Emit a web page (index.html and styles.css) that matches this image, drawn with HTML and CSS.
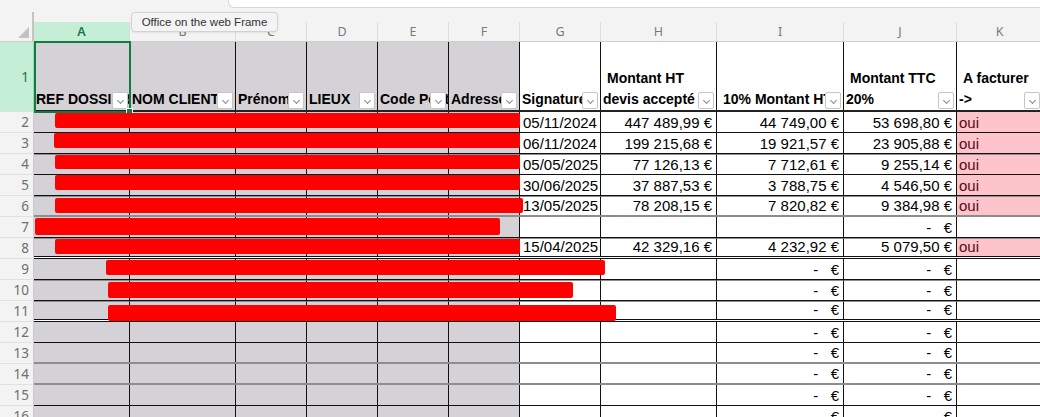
FILE: index.html
```html
<!DOCTYPE html>
<html lang="fr">
<head>
<meta charset="utf-8">
<title>Feuille</title>
<link rel="stylesheet" href="styles.css">
</head>
<body>
<div class="app">
  <div class="topbar"><div class="fx"></div></div>

  <div class="colhead">
    <div class="corner"><span class="tri"></span></div>
    <div class="cl sel w-a">A</div>
    <div class="cl w-b">B</div>
    <div class="cl w-c">C</div>
    <div class="cl w-d">D</div>
    <div class="cl w-e">E</div>
    <div class="cl w-f">F</div>
    <div class="cl w-g">G</div>
    <div class="cl w-h">H</div>
    <div class="cl w-i">I</div>
    <div class="cl w-j">J</div>
    <div class="cl w-k">K</div>
  </div>

  <div class="sheet">
    <div class="row r1">
      <div class="rn sel">1</div>
      <div class="cells b-2">
        <div class="c hc g w-a nob"><span>REF DOSSIER</span><i class="fb"></i></div>
        <div class="c hc g w-b"><span>NOM CLIENT</span><i class="fb"></i></div>
        <div class="c hc g w-c"><span>Prénom</span><i class="fb"></i></div>
        <div class="c hc g w-d"><span>LIEUX</span><i class="fb"></i></div>
        <div class="c hc g w-e"><span>Code Postal</span><i class="fb"></i></div>
        <div class="c hc g w-f"><span>Adresse</span><i class="fb"></i></div>
        <div class="c hc w-g"><span>Signature</span><i class="fb"></i></div>
        <div class="c hc w-h"><span class="l1">Montant HT</span><span>devis accepté</span><i class="fb"></i></div>
        <div class="c hc w-i"><span class="l1b">10% Montant HT</span><i class="fb"></i></div>
        <div class="c hc w-j"><span class="l1">Montant TTC</span><span>20%</span><i class="fb"></i></div>
        <div class="c hc w-k"><span class="l1">A facturer</span><span>-&gt;</span><i class="fb"></i></div>
      </div>
    </div>

    <div class="row"><div class="rn">2</div><div class="cells b-s">
      <div class="c g w-a"></div><div class="c g w-b"></div><div class="c g w-c"></div><div class="c g w-d"></div><div class="c g w-e"></div><div class="c g w-f"></div>
      <div class="c w-g">05/11/2024</div><div class="c n w-h">447&nbsp;489,99&nbsp;€</div><div class="c n w-i">44&nbsp;749,00&nbsp;€</div><div class="c n w-j">53&nbsp;698,80&nbsp;€</div><div class="c p w-k">oui</div>
    </div></div>

    <div class="row"><div class="rn">3</div><div class="cells b-s">
      <div class="c g w-a"></div><div class="c g w-b"></div><div class="c g w-c"></div><div class="c g w-d"></div><div class="c g w-e"></div><div class="c g w-f"></div>
      <div class="c w-g">06/11/2024</div><div class="c n w-h">199&nbsp;215,68&nbsp;€</div><div class="c n w-i">19&nbsp;921,57&nbsp;€</div><div class="c n w-j">23&nbsp;905,88&nbsp;€</div><div class="c p w-k">oui</div>
    </div></div>

    <div class="row gt"><div class="rn">4</div><div class="cells b-s">
      <div class="c g w-a"></div><div class="c g w-b"></div><div class="c g w-c"></div><div class="c g w-d"></div><div class="c g w-e"></div><div class="c g w-f"></div>
      <div class="c w-g">05/05/2025</div><div class="c n w-h">77&nbsp;126,13&nbsp;€</div><div class="c n w-i">7&nbsp;712,61&nbsp;€</div><div class="c n w-j">9&nbsp;255,14&nbsp;€</div><div class="c p w-k">oui</div>
    </div></div>

    <div class="row"><div class="rn">5</div><div class="cells b-s">
      <div class="c g w-a"></div><div class="c g w-b"></div><div class="c g w-c"></div><div class="c g w-d"></div><div class="c g w-e"></div><div class="c g w-f"></div>
      <div class="c w-g">30/06/2025</div><div class="c n w-h">37&nbsp;887,53&nbsp;€</div><div class="c n w-i">3&nbsp;788,75&nbsp;€</div><div class="c n w-j">4&nbsp;546,50&nbsp;€</div><div class="c p w-k">oui</div>
    </div></div>

    <div class="row gt"><div class="rn">6</div><div class="cells b-g">
      <div class="c g w-a"></div><div class="c g w-b"></div><div class="c g w-c"></div><div class="c g w-d"></div><div class="c g w-e"></div><div class="c g w-f"></div>
      <div class="c w-g">13/05/2025</div><div class="c n w-h">78&nbsp;208,15&nbsp;€</div><div class="c n w-i">7&nbsp;820,82&nbsp;€</div><div class="c n w-j">9&nbsp;384,98&nbsp;€</div><div class="c p w-k">oui</div>
    </div></div>

    <div class="row"><div class="rn">7</div><div class="cells b-s">
      <div class="c g w-a"></div><div class="c g w-b"></div><div class="c g w-c"></div><div class="c g w-d"></div><div class="c g w-e"></div><div class="c g w-f"></div>
      <div class="c w-g"></div><div class="c n w-h"></div><div class="c n w-i"></div><div class="c n w-j dash">-   €</div><div class="c w-k"></div>
    </div></div>

    <div class="row gt"><div class="rn">8</div><div class="cells b-d">
      <div class="c g w-a"></div><div class="c g w-b"></div><div class="c g w-c"></div><div class="c g w-d"></div><div class="c g w-e"></div><div class="c g w-f"></div>
      <div class="c w-g">15/04/2025</div><div class="c n w-h">42&nbsp;329,16&nbsp;€</div><div class="c n w-i">4&nbsp;232,92&nbsp;€</div><div class="c n w-j">5&nbsp;079,50&nbsp;€</div><div class="c p w-k">oui</div>
    </div></div>

    <div class="row"><div class="rn">9</div><div class="cells b-s">
      <div class="c g w-a"></div><div class="c g w-b"></div><div class="c g w-c"></div><div class="c g w-d"></div><div class="c g w-e"></div><div class="c g w-f"></div>
      <div class="c w-g"></div><div class="c n w-h"></div><div class="c n w-i dash">-   €</div><div class="c n w-j dash">-   €</div><div class="c w-k"></div>
    </div></div>

    <div class="row gt"><div class="rn">10</div><div class="cells b-s">
      <div class="c g w-a"></div><div class="c g w-b"></div><div class="c g w-c"></div><div class="c g w-d"></div><div class="c g w-e"></div><div class="c g w-f"></div>
      <div class="c w-g"></div><div class="c n w-h"></div><div class="c n w-i dash">-   €</div><div class="c n w-j dash">-   €</div><div class="c w-k"></div>
    </div></div>

    <div class="row gt"><div class="rn">11</div><div class="cells b-d">
      <div class="c g w-a"></div><div class="c g w-b"></div><div class="c g w-c"></div><div class="c g w-d"></div><div class="c g w-e"></div><div class="c g w-f"></div>
      <div class="c w-g"></div><div class="c n w-h"></div><div class="c n w-i dash">-   €</div><div class="c n w-j dash">-   €</div><div class="c w-k"></div>
    </div></div>

    <div class="row"><div class="rn">12</div><div class="cells b-s">
      <div class="c g w-a"></div><div class="c g w-b"></div><div class="c g w-c"></div><div class="c g w-d"></div><div class="c g w-e"></div><div class="c g w-f"></div>
      <div class="c w-g"></div><div class="c n w-h"></div><div class="c n w-i dash">-   €</div><div class="c n w-j dash">-   €</div><div class="c w-k"></div>
    </div></div>

    <div class="row"><div class="rn">13</div><div class="cells b-g">
      <div class="c g w-a"></div><div class="c g w-b"></div><div class="c g w-c"></div><div class="c g w-d"></div><div class="c g w-e"></div><div class="c g w-f"></div>
      <div class="c w-g"></div><div class="c n w-h"></div><div class="c n w-i dash">-   €</div><div class="c n w-j dash">-   €</div><div class="c w-k"></div>
    </div></div>

    <div class="row"><div class="rn">14</div><div class="cells b-g">
      <div class="c g w-a"></div><div class="c g w-b"></div><div class="c g w-c"></div><div class="c g w-d"></div><div class="c g w-e"></div><div class="c g w-f"></div>
      <div class="c w-g"></div><div class="c n w-h"></div><div class="c n w-i dash">-   €</div><div class="c n w-j dash">-   €</div><div class="c w-k"></div>
    </div></div>

    <div class="row"><div class="rn">15</div><div class="cells b-s">
      <div class="c g w-a"></div><div class="c g w-b"></div><div class="c g w-c"></div><div class="c g w-d"></div><div class="c g w-e"></div><div class="c g w-f"></div>
      <div class="c w-g"></div><div class="c n w-h"></div><div class="c n w-i dash">-   €</div><div class="c n w-j dash">-   €</div><div class="c w-k"></div>
    </div></div>

    <div class="row"><div class="rn">16</div><div class="cells b-s">
      <div class="c g w-a"></div><div class="c g w-b"></div><div class="c g w-c"></div><div class="c g w-d"></div><div class="c g w-e"></div><div class="c g w-f"></div>
      <div class="c w-g"></div><div class="c n w-h"></div><div class="c n w-i dash">-   €</div><div class="c n w-j dash">-   €</div><div class="c w-k"></div>
    </div></div>

    <div class="selbox"><i class="handle"></i></div>

    <div class="redact" style="left:55px;top:1px;width:465px;height:15px"></div>
    <div class="redact" style="left:54px;top:21px;width:466px;height:15px"></div>
    <div class="redact" style="left:55px;top:43px;width:465px;height:14px"></div>
    <div class="redact" style="left:55px;top:63px;width:465px;height:15px"></div>
    <div class="redact" style="left:55px;top:86px;width:468px;height:15px"></div>
    <div class="redact" style="left:35px;top:106px;width:465px;height:17px"></div>
    <div class="redact" style="left:55px;top:127px;width:465px;height:15px"></div>
    <div class="redact" style="left:106px;top:148px;width:499px;height:15px"></div>
    <div class="redact" style="left:108px;top:170px;width:465px;height:16px"></div>
    <div class="redact" style="left:108px;top:193px;width:508px;height:16px"></div>
  </div>

  <div class="tooltip">Office on the web Frame</div>
</div>
</body>
</html>
```

FILE: styles.css
```css
html, body {
  margin: 0;
  padding: 0;
}
body {
  width: 1040px;
  height: 417px;
  overflow: hidden;
  background: #f3f3f3;
  font-family: "Liberation Sans", Arial, sans-serif;
  color: #000;
}
.app {
  position: relative;
  width: 1040px;
  height: 417px;
  overflow: hidden;
}

/* top strip */
.topbar {
  height: 8px;
  display: flex;
}
.fx {
  margin-left: 228px;
  flex: 1;
  background: #fff;
  border-left: 1px solid #d8d8d8;
  border-bottom: 1px solid #d8d8d8;
  border-bottom-left-radius: 6px;
}

/* column letters */
.colhead {
  display: flex;
  align-items: flex-end;
  height: 34px;
  border-bottom: 1px solid #cfcfcf;
  box-sizing: border-box;
}
.corner {
  position: relative;
  width: 34px;
  height: 29px;
  box-sizing: border-box;
  border-right: 2px solid #c4c4c4;
  flex: none;
}
.tri {
  position: absolute;
  right: 3px;
  bottom: 3px;
  width: 0;
  height: 0;
  border-left: 11px solid transparent;
  border-bottom: 11px solid #c2c2c2;
}
.cl {
  flex: none;
  height: 19px;
  box-sizing: border-box;
  border-right: 1px solid #dcdcdc;
  font-family: "Noto Sans", "Liberation Sans", sans-serif;
  font-size: 12.5px;
  line-height: 19px;
  text-align: center;
  color: #7a7a7a;
}
.cl.sel {
  background: #c5eed7;
  color: #107c41;
  font-weight: 600;
}

/* widths */
.w-a { width: 96px; }
.w-b { width: 106px; }
.w-c { width: 71px; }
.w-d { width: 71px; }
.w-e { width: 71px; }
.w-f { width: 71px; }
.w-g { width: 81px; }
.w-h { width: 116px; }
.w-i { width: 127px; }
.w-j { width: 113px; }
.w-k { width: 85px; border-right: none !important; }

/* sheet */
.sheet {
  position: relative;
}
.row {
  display: flex;
  height: 21px;
}
.row.r1 {
  height: 70px;
}
.rn {
  flex: none;
  width: 34px;
  box-sizing: border-box;
  border-right: 1px solid #cbcbcb;
  border-bottom: 1px solid #e1e1e1;
  background: #f3f3f3;
  font-family: "Noto Sans", "Liberation Sans", sans-serif;
  font-size: 13.5px;
  line-height: 20px;
  text-align: right;
  padding-right: 4px;
  color: #6f6f6f;
}
.rn.sel {
  background: #c5eed7;
  color: #107c41;
  line-height: 70px;
  border-right-color: #9fd8b8;
}
.cells {
  display: flex;
  flex: none;
  box-sizing: border-box;
  background: #fff;
}
.b-s { border-bottom: 1px solid #111; }
.b-2 { border-bottom: 2px solid #222; }
.b-g { border-bottom: 2px solid #8d8d8d; }
.b-d { border-bottom: 3px double #111; }
.gt .c { border-top: 1px solid #8e8e8e; }

.c {
  flex: none;
  box-sizing: border-box;
  border-right: 1px solid #111;
  font-size: 15px;
  line-height: 19px;
  padding: 0 3px;
  white-space: nowrap;
  overflow: hidden;
  display: flex;
  align-items: flex-end;
}
.c.g { background: #d4d2d6; }
.c.p { background: #fdc4cc; color: #5c0a14; padding-left: 2px; }
.c.n { justify-content: flex-end; padding-right: 4px; }
.c.dash { white-space: pre; }

/* header row cells */
.hc {
  position: relative;
  flex-direction: column;
  align-items: flex-start;
  justify-content: flex-end;
  font-weight: bold;
  font-size: 14px;
  line-height: 21px;
  padding: 0 0 0 2px;
}
.hc .l1 { padding-left: 4px; }
.hc .l1b { padding-left: 4px; }
.hc.nob { border-right: none; }
.fb {
  position: absolute;
  right: 2px;
  bottom: 1px;
  width: 16px;
  height: 17px;
  box-sizing: border-box;
  background: #fff;
  border: 1px solid #c6c6c6;
  border-radius: 2px;
}
.fb::after {
  content: "";
  position: absolute;
  left: 5px;
  top: 5px;
  width: 4px;
  height: 4px;
  border-right: 1px solid #8a8a8a;
  border-bottom: 1px solid #8a8a8a;
  transform: rotate(45deg);
}

/* selection */
.selbox {
  position: absolute;
  left: 34px;
  top: -1px;
  width: 97px;
  height: 72px;
  box-sizing: border-box;
  border: 2px solid #107c41;
}
.handle {
  position: absolute;
  right: -4px;
  bottom: -4px;
  width: 5px;
  height: 5px;
  background: #107c41;
  border: 1px solid #fff;
}

/* redactions */
.redact {
  position: absolute;
  background: #ff0000;
  border-radius: 2px;
}
.sheet .redact { margin-top: 70px; }

/* tooltip */
.tooltip {
  position: absolute;
  left: 131px;
  top: 12px;
  width: 147px;
  height: 20px;
  box-sizing: border-box;
  background: #f4f4f4;
  border: 1px solid #d2d2d2;
  border-radius: 4px;
  box-shadow: 0 1px 2px rgba(0,0,0,0.08);
  font-family: "Liberation Sans", sans-serif;
  font-size: 11.5px;
  line-height: 18px;
  text-align: center;
  color: #333;
}
```
